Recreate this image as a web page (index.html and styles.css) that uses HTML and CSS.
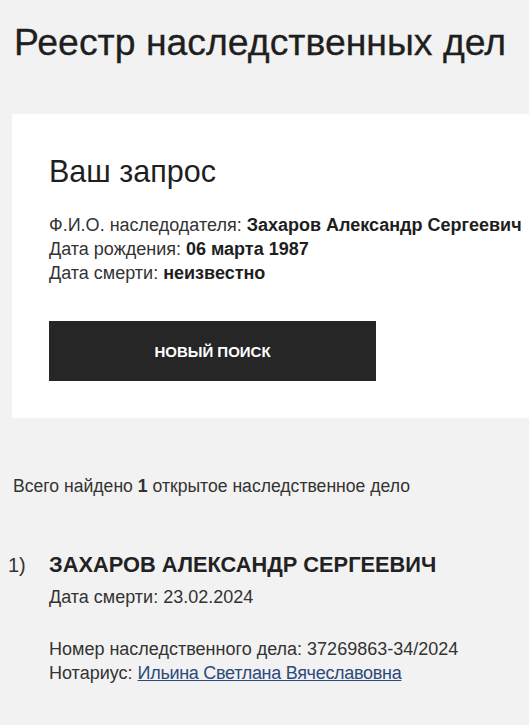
FILE: index.html
```html
<!DOCTYPE html>
<html lang="ru">
<head>
<meta charset="utf-8">
<title>Реестр наследственных дел</title>
<link rel="stylesheet" href="styles.css">
</head>
<body>
<div class="page">
  <h1 class="title">Реестр наследственных дел</h1>
  <section class="card">
    <h2 class="card-title">Ваш запрос</h2>
    <div class="info">
      <div>Ф.И.О. наследодателя: <b>Захаров Александр Сергеевич</b></div>
      <div>Дата рождения: <b>06 марта 1987</b></div>
      <div>Дата смерти: <b>неизвестно</b></div>
    </div>
    <button class="btn" type="button">НОВЫЙ ПОИСК</button>
  </section>
  <p class="summary">Всего найдено <b>1</b> открытое наследственное дело</p>
  <ol class="results">
    <li class="result">
      <span class="num">1)</span>
      <div class="result-body">
        <div class="result-name">ЗАХАРОВ АЛЕКСАНДР СЕРГЕЕВИЧ</div>
        <div class="line">Дата смерти: 23.02.2024</div>
        <div class="details">
          <div class="line">Номер наследственного дела: 37269863-34/2024</div>
          <div class="line">Нотариус: <a href="#" class="link">Ильина Светлана Вячеславовна</a></div>
        </div>
      </div>
    </li>
  </ol>
</div>
</body>
</html>
```
FILE: styles.css
```css
html, body {
  margin: 0;
  padding: 0;
  background: #f2f2f2;
}
body {
  font-family: "Liberation Sans", Arial, sans-serif;
  color: #2b2b2b;
  overflow: hidden;
}
.page {
  display: flex;
  flex-direction: column;
}
.title {
  margin: 20px 0 0 14px;
  font-size: 37.4px;
  font-weight: normal;
  line-height: 44px;
  color: #1f1f1f;
  white-space: nowrap;
  -webkit-text-stroke: 0.3px #1f1f1f;
}
.card {
  margin: 50px 0 0 12px;
  background: #fff;
  padding: 39px 0 37px 37px;
  display: flex;
  flex-direction: column;
  align-items: flex-start;
}
.card-title {
  margin: 0;
  font-size: 30.5px;
  font-weight: normal;
  line-height: 36px;
  color: #1f1f1f;
}
.info {
  margin-top: 24px;
  font-size: 18px;
  line-height: 24px;
  color: #333;
  white-space: nowrap;
}
.info b {
  color: #1e1e1e;
}
.btn {
  margin-top: 36px;
  width: 327px;
  height: 60px;
  border: 0;
  background: #262626;
  color: #fff;
  font-family: "Liberation Sans", Arial, sans-serif;
  font-weight: bold;
  font-size: 15px;
  padding: 0;
}
.summary {
  margin: 58px 0 0 13px;
  font-size: 17.6px;
  line-height: 20px;
  color: #333;
}
.results {
  list-style: none;
  margin: 55px 0 0 0;
  padding: 0;
}
.result {
  display: flex;
  align-items: baseline;
}
.num {
  flex: none;
  width: 49px;
  padding-left: 8px;
  box-sizing: border-box;
  font-size: 20px;
  line-height: 28px;
  color: #333;
}
.result-name {
  font-size: 21.8px;
  font-weight: bold;
  line-height: 28px;
  color: #222;
}
.line {
  font-size: 18px;
  line-height: 24px;
  color: #333;
}
.result-body > .line {
  margin-top: 6px;
}
.details {
  margin-top: 28px;
}
.link {
  color: #2c4a7c;
  text-decoration: underline;
  letter-spacing: -0.3px;
}
```
